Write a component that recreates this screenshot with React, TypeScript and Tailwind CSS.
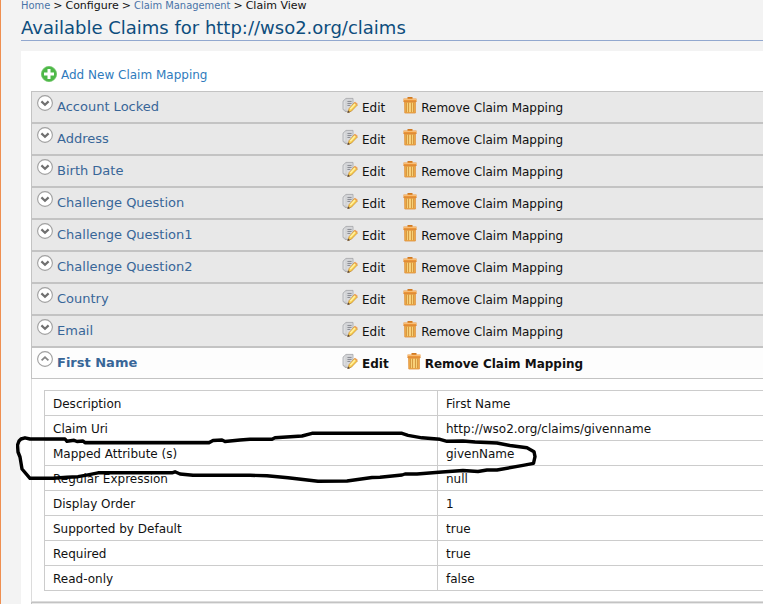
import React from "react";

const closedClaims = [
  "Account Locked",
  "Address",
  "Birth Date",
  "Challenge Question",
  "Challenge Question1",
  "Challenge Question2",
  "Country",
  "Email",
];

const details: [string, string][] = [
  ["Description", "First Name"],
  ["Claim Uri", "http://wso2.org/claims/givenname"],
  ["Mapped Attribute (s)", "givenName"],
  ["Regular Expression", "null"],
  ["Display Order", "1"],
  ["Supported by Default", "true"],
  ["Required", "true"],
  ["Read-only", "false"],
];

function ToggleIcon({ open }: { open: boolean }) {
  return (
    <svg width="16" height="16" viewBox="0 0 16 16" fill="none" aria-hidden="true">
      <circle cx="8" cy="8" r="7.4" fill="#fff" stroke="#a0a0a0" strokeWidth="1.1" />
      <path
        d={open ? "M4.6 9.4 8 6.2l3.4 3.2" : "M4.4 6.4 8 9.8l3.6-3.4"}
        stroke={open ? "#858585" : "#707070"}
        strokeWidth={open ? 1.8 : 2.2}
      />
    </svg>
  );
}

function AddIcon() {
  return (
    <svg width="16" height="16" viewBox="0 0 16 16" aria-hidden="true">
      <circle cx="8" cy="8" r="7.6" fill="#4db848" stroke="#6cc463" strokeWidth=".8" />
      <path d="M8 3v10M3 8h10" stroke="#fff" strokeWidth="3" />
    </svg>
  );
}

function EditIcon() {
  return (
    <svg width="16" height="17" viewBox="0 -1 16 17" aria-hidden="true">
      <path d="M4 .4h7v10.2l-2 2.8H3L1 11.2V3.2z" fill="#c9cacd" stroke="#a3a4a8" strokeWidth=".8" />
      <path d="M1.6 3.8 3.6 1.2v10.4L1.6 11z" fill="#dddee0" />
      <path d="M4.4 1.2h6v8.6L8 12.4H4.4z" fill="#d9dadd" />
      <path d="M5.4 3.4h4.2M5.4 5.4h4.2M5.4 7.4h3" stroke="#85878d" strokeWidth="1" />
      <path d="m5.8 14.6 1.3-4L12.4 4.6l3.1 2.3-6 6.2z" fill="#f8cd4d" stroke="#cb8d33" strokeWidth=".7" />
      <path d="m8.2 11.2 4.8-5.2" stroke="#fff1a4" strokeWidth="1.6" />
      <path d="m12 4.8 1-1.1 2.7 2.1-1 1.3z" fill="#eda058" />
      <path d="m5.4 15 .7-2.4 2 1.6z" fill="#57483c" />
    </svg>
  );
}

function TrashIcon() {
  return (
    <svg width="14" height="17" viewBox="0 0 14 17" aria-hidden="true">
      <path d="M4.5 0h5v2h-5z" fill="#d07a22" />
      <path d="M.5 1.5h13v3.2H.5z" fill="#ee9a3c" />
      <path d="M1 2.5h12" stroke="#f8bd77" />
      <path d="M.5 4.4h13" stroke="#d67a22" strokeWidth=".8" />
      <path d="M1.6 5h10.8v11H1.8z" fill="#efab48" stroke="#e0913a" strokeWidth=".8" />
      <path d="M3.5 5.8v9.3M5.5 5.8v9.3M8.5 5.8v9.3M10.5 5.8v9.3" stroke="#cf9440" strokeWidth=".8" />
      <path d="M4.5 5.8v9.3M6.5 5.8v9.3M7.5 5.8v9.3M9.5 5.8v9.3" stroke="#f8d57e" strokeWidth=".9" />
    </svg>
  );
}

function ClaimHeader({ name, open = false }: { name: string; open?: boolean }) {
  return (
    <div
      className={`flex h-8 items-start border border-r-0 border-[#c3c3c3] ${
        open ? "bg-[#fdfdfd] font-bold" : "bg-[#e8e8e8]"
      }`}
    >
      <button type="button" aria-expanded={open} className="flex w-[310px] items-start gap-1 pt-[3px] pl-[5px] text-left text-[13px] leading-5 text-[#386698]">
        <ToggleIcon open={open} />
        <span className="pt-0.5">{name}</span>
      </button>
      <a href="#edit" className="mr-[18px] flex items-start gap-1 pt-[5px] text-xs leading-5 text-[#111]">
        <EditIcon />
        <span className="pt-px">Edit</span>
      </a>
      <a href="#remove" className="flex items-start gap-1 pt-[5px] text-xs leading-5 whitespace-nowrap text-[#111]">
        <TrashIcon />
        <span className="pt-px">Remove Claim Mapping</span>
      </a>
    </div>
  );
}

function PenCircle() {
  return (
    <svg className="pointer-events-none absolute top-[430px] left-[15px]" width="522" height="54" viewBox="16 430 522 54" fill="none" aria-hidden="true">
      <path
        d="M19 441 21 439 25 437.8 30 439H65L67 441.3 74 440.3 77 441.5 83 441 85 442.7H209L213 440.5 222 440 225 441.5 240 440 250 439.3H272L275 437.8 302 436 312 433.3H402L408 435.3 422 437.8 440 439.3 447 441.3 463 441 475 442 497 443 510 445.5 527 447.8 534 451.7 535 456.7 533.5 463.3 523 465.3 497 470 487 470 478 471.5 463 470.5 442 472 417 474 405 474 402 475 380 477.3 372 477.5 347 481 318 481.3 288 477.7 267 475.7 250 475.3H193L180 474 175 471.8 172 472.8H98L88 474.8 78 476.7 67 477.3 53 478.3H30L22 469 20 457 18 452 17.5 445Z"
        stroke="#000"
        strokeWidth="3.4"
        strokeLinejoin="round"
      />
    </svg>
  );
}

export default function App() {
  return (
    <div className="relative min-h-screen overflow-hidden border-l border-[#ef8f50] bg-[#f3f3f3] pl-5 font-['DejaVu_Sans',sans-serif] text-[#111]">
      <nav aria-label="Breadcrumb" className="flex h-3 gap-[3px] text-[11px] leading-3 whitespace-nowrap">
        <a href="#home" className="font-['DejaVu_Sans_Condensed','DejaVu_Sans',sans-serif] text-[#4a74a8]">Home</a>
        <span>&gt;</span>
        <span>Configure</span>
        <span>&gt;</span>
        <a href="#claims" className="font-['DejaVu_Sans_Condensed','DejaVu_Sans',sans-serif] text-[#4a74a8]">Claim Management</a>
        <span>&gt;</span>
        <span>Claim View</span>
      </nav>
      <h1 className="mb-2.5 h-[29px] border-b border-[#92a8cf] pt-1 text-lg leading-6 whitespace-nowrap text-[#0d4d7d]">
        Available Claims for http://wso2.org/claims
      </h1>
      <main className="bg-white pt-[15px] pl-2.5">
        <a href="#add" className="mb-[9px] ml-2.5 flex h-4 w-fit items-start gap-1 text-xs leading-[18px] whitespace-nowrap text-[#2f7bbd]">
          <AddIcon />
          Add New Claim Mapping
        </a>
        {closedClaims.map((name) => (
          <ClaimHeader key={name} name={name} />
        ))}
        <ClaimHeader name="First Name" open />
        <section aria-label="First Name" className="border-b border-l border-[#dcdcdc] pt-[11px] pb-[10px] pl-3">
          <table className="w-full border-collapse text-xs leading-4">
            <tbody>
              {details.map(([label, value]) => (
                <tr key={label} className="h-[25px] border-y border-[#cccccc]">
                  <th scope="row" className="w-[393px] border-x border-[#cccccc] pt-[5px] pb-[3px] pl-2 text-left font-normal">
                    {label}
                  </th>
                  <td className="pt-[5px] pb-[3px] pl-2">{value}</td>
                </tr>
              ))}
            </tbody>
          </table>
        </section>
        <div className="h-0.5 border-t border-l border-[#c3c3c3] bg-[#e8e8e8]" />
      </main>
      <PenCircle />
    </div>
  );
}
